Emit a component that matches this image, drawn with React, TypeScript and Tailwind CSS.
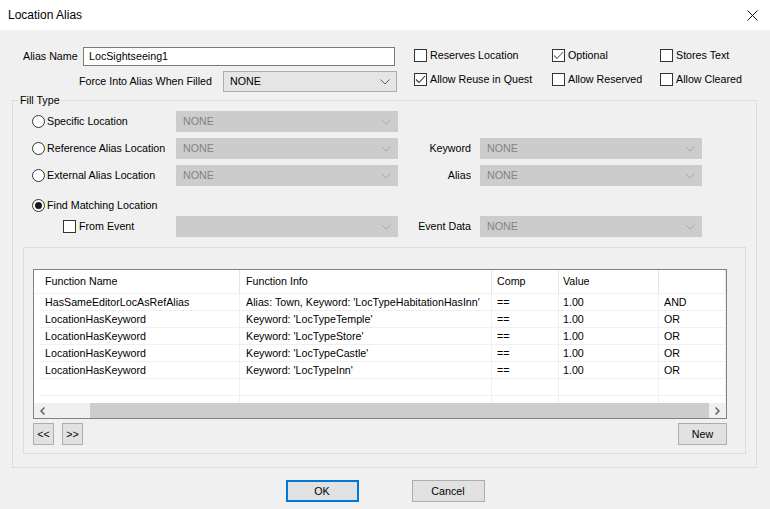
import React from "react";

function Check({ checked, soft }: { checked?: boolean; soft?: boolean }) {
  return (
    <span className="flex h-[13px] w-[13px] shrink-0 items-center justify-center border border-[#333333] bg-white">
      {checked && (
        <svg width="11" height="9" viewBox="0 0 11 9">
          <polyline points="1,4.5 4,7.5 10,1" fill="none" stroke={soft ? "#707070" : "#333333"} strokeWidth="1.1" />
        </svg>
      )}
    </span>
  );
}

function Radio({ checked }: { checked?: boolean }) {
  return (
    <span className="flex h-[13px] w-[13px] shrink-0 items-center justify-center rounded-full border border-[#333333] bg-white">
      {checked && <span className="h-[7px] w-[7px] rounded-full bg-[#1a1a1a]" />}
    </span>
  );
}

function Chevron({ color }: { color: string }) {
  return (
    <svg width="10" height="6" viewBox="0 0 10 6" className="shrink-0">
      <polyline points="0.5,0.5 5,5 9.5,0.5" fill="none" stroke={color} strokeWidth="1" />
    </svg>
  );
}

function Dropdown({ value, disabled, className }: { value: string; disabled?: boolean; className: string }) {
  return (
    <div
      className={`flex h-[21px] items-center justify-between pl-[6px] pr-[6px] ${
        disabled ? "border border-[#cccccc] bg-[#cccccc] text-[#838383]" : "border border-[#adadad] bg-[#e5e5e5] text-black"
      } ${className}`}
    >
      <span>{value}</span>
      <Chevron color={disabled ? "#a8a8a8" : "#606060"} />
    </div>
  );
}

function Button({ label, primary, className }: { label: string; primary?: boolean; className: string }) {
  return (
    <div
      className={`flex items-center justify-center bg-[#e1e1e1] ${
        primary ? "border-2 border-[#0078d7]" : "border border-[#adadad]"
      } ${className}`}
    >
      {label}
    </div>
  );
}

const rows = [
  ["HasSameEditorLocAsRefAlias", "Alias: Town, Keyword: 'LocTypeHabitationHasInn'", "==", "1.00", "AND"],
  ["LocationHasKeyword", "Keyword: 'LocTypeTemple'", "==", "1.00", "OR"],
  ["LocationHasKeyword", "Keyword: 'LocTypeStore'", "==", "1.00", "OR"],
  ["LocationHasKeyword", "Keyword: 'LocTypeCastle'", "==", "1.00", "OR"],
  ["LocationHasKeyword", "Keyword: 'LocTypeInn'", "==", "1.00", "OR"],
  ["", "", "", "", ""],
  ["", "", "", "", ""],
];

const cols = "grid grid-cols-[5px_201px_252px_67px_100px_1fr]";

export default function App() {
  return (
    <div className="flex h-[509px] w-[770px] flex-col overflow-hidden bg-[#f0f0f0] font-['Liberation_Sans',Arial,sans-serif] text-[10.7px] leading-none text-black">
      {/* title bar */}
      <div className="flex h-[30px] shrink-0 items-center justify-between bg-white pl-[8px] pr-[12px]">
        <span className="text-[12px]">Location Alias</span>
        <svg width="11" height="11" viewBox="0 0 11 11">
          <path d="M0.5 0.5 L10.5 10.5 M10.5 0.5 L0.5 10.5" stroke="#111" strokeWidth="1" />
        </svg>
      </div>

      <div className="flex flex-col pl-[12px] pr-[13px] pt-[17px]">
        {/* top fields */}
        <div className="flex items-start">
          <div className="flex w-[385px] flex-col">
            <div className="flex h-[19px] items-center">
              <span className="w-[71px] pl-[11px]">Alias Name</span>
              <div className="flex h-[19px] w-[312px] items-center border border-[#7a7a7a] bg-white pl-[5px]">LocSightseeing1</div>
            </div>
            <div className="mt-[5px] flex items-center">
              <span className="w-[211px] pr-[11px] text-right">Force Into Alias When Filled</span>
              <Dropdown value="NONE" className="w-[174px]" />
            </div>
          </div>
          <div className="ml-[17px] grid grid-cols-[138px_108px_1fr] content-start gap-y-[11px] pt-[2px]">
            <label className="flex h-[13px] items-center gap-[3px]"><Check />Reserves Location</label>
            <label className="flex h-[13px] items-center gap-[3px]"><Check checked soft />Optional</label>
            <label className="flex h-[13px] items-center gap-[3px]"><Check />Stores Text</label>
            <label className="flex h-[13px] items-center gap-[3px]"><Check checked />Allow Reuse in Quest</label>
            <label className="flex h-[13px] items-center gap-[3px]"><Check />Allow Reserved</label>
            <label className="flex h-[13px] items-center gap-[3px]"><Check />Allow Cleared</label>
          </div>
        </div>

        {/* fill type group */}
        <div className="relative mt-[8px] flex h-[368px] flex-col border border-[#dcdcdc] pt-[10px]">
          <span className="absolute left-[6px] top-[-6px] bg-[#f0f0f0] px-[1px]">Fill Type</span>

          <div className="flex h-[21px] items-center pl-[19px]">
            <label className="flex w-[144px] items-center gap-[2px]"><Radio />Specific Location</label>
            <Dropdown value="NONE" disabled className="w-[222px]" />
          </div>
          <div className="mt-[6px] flex h-[21px] items-center pl-[19px]">
            <label className="flex w-[144px] items-center gap-[2px]"><Radio />Reference Alias Location</label>
            <Dropdown value="NONE" disabled className="w-[222px]" />
            <span className="w-[82px] pr-[9px] text-right">Keyword</span>
            <Dropdown value="NONE" disabled className="w-[222px]" />
          </div>
          <div className="mt-[6px] flex h-[21px] items-center pl-[19px]">
            <label className="flex w-[144px] items-center gap-[2px]"><Radio />External Alias Location</label>
            <Dropdown value="NONE" disabled className="w-[222px]" />
            <span className="w-[82px] pr-[9px] text-right">Alias</span>
            <Dropdown value="NONE" disabled className="w-[222px]" />
          </div>
          <div className="mt-[9px] flex h-[20px] items-center pl-[19px]">
            <label className="flex w-[144px] items-center gap-[2px]"><Radio checked />Find Matching Location</label>
          </div>
          <div className="mt-[1px] flex h-[21px] items-center pl-[19px]">
            <label className="flex w-[144px] items-center gap-[3px] pl-[31px]"><Check />From Event</label>
            <Dropdown value="" disabled className="w-[222px]" />
            <span className="w-[82px] pr-[9px] text-right">Event Data</span>
            <Dropdown value="NONE" disabled className="w-[222px]" />
          </div>

          {/* conditions panel */}
          <div className="mx-[10px] mt-[10px] flex flex-col border border-[#dcdcdc] pb-[8px] pl-[9px] pr-[18px] pt-[21px]">
            <div className="flex h-[150px] flex-col border border-[#828282] bg-white">
              <div className="flex-1 overflow-hidden">
                <div className={`${cols} h-[24px] items-center border-b border-[#f0f0f0]`}>
                  <span />
                  <span className="flex h-full items-center border-r border-[#e5e5e5] pl-[6px]">Function Name</span>
                  <span className="flex h-full items-center border-r border-[#e5e5e5] pl-[6px]">Function Info</span>
                  <span className="flex h-full items-center border-r border-[#e5e5e5] pl-[5px]">Comp</span>
                  <span className="flex h-full items-center border-r border-[#e5e5e5] pl-[4px]">Value</span>
                  <span className="flex h-full items-center border-r border-[#e5e5e5]" />
                </div>
                {rows.map((r, i) => (
                  <div key={i} className={`${cols} h-[17px] items-center`}>
                    <span />
                    <span className="flex h-full items-center border-b border-r border-[#f0f0f0] pl-[6px]">{r[0]}</span>
                    <span className="flex h-full items-center border-b border-r border-[#f0f0f0] pl-[6px] whitespace-nowrap">{r[1]}</span>
                    <span className="flex h-full items-center border-b border-r border-[#f0f0f0] pl-[5px]">{r[2]}</span>
                    <span className="flex h-full items-center border-b border-r border-[#f0f0f0] pl-[4px]">{r[3]}</span>
                    <span className="flex h-full items-center border-b border-r border-[#f0f0f0] pl-[5px]">{r[4]}</span>
                  </div>
                ))}
              </div>
              {/* horizontal scrollbar */}
              <div className="flex h-[15px] shrink-0 items-center bg-[#f0f0f0]">
                <span className="flex w-[17px] justify-center">
                  <svg width="5" height="8" viewBox="0 0 5 8"><polyline points="4.5,0.5 1,4 4.5,7.5" fill="none" stroke="#606060" strokeWidth="1.5" /></svg>
                </span>
                <span className="w-[39px]" />
                <span className="h-full flex-1 bg-[#cdcdcd]" />
                <span className="flex w-[17px] justify-center">
                  <svg width="5" height="8" viewBox="0 0 5 8"><polyline points="0.5,0.5 4,4 0.5,7.5" fill="none" stroke="#606060" strokeWidth="1.5" /></svg>
                </span>
              </div>
            </div>
            <div className="mt-[4px] flex items-center">
              <Button label="<<" className="h-[22px] w-[21px]" />
              <Button label=">>" className="ml-[8px] h-[22px] w-[21px]" />
              <Button label="New" className="ml-auto h-[22px] w-[49px]" />
            </div>
          </div>
        </div>
      </div>

      {/* dialog buttons */}
      <div className="mt-[12px] flex justify-center gap-[53px]">
        <Button label="OK" primary className="h-[22px] w-[73px]" />
        <Button label="Cancel" className="h-[22px] w-[73px]" />
      </div>
    </div>
  );
}
